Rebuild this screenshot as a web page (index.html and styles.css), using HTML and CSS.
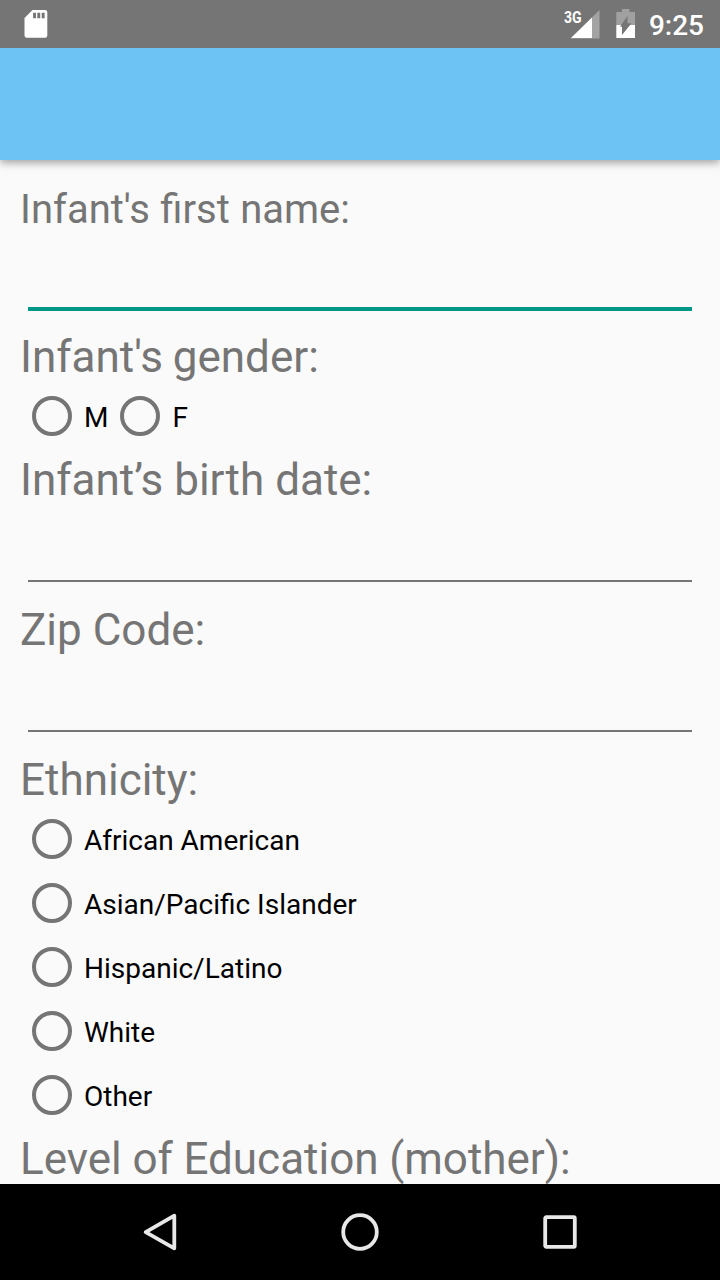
FILE: index.html
```html
<!DOCTYPE html>
<html lang="en">
<head>
<meta charset="utf-8">
<title>Infant details</title>
<link rel="stylesheet" href="styles.css">
</head>
<body>
<div class="screen">
  <div class="status-bar">
    <svg class="sd-card" width="24" height="30" viewBox="0 0 24 30">
      <path fill="#fff" fill-rule="evenodd" d="M8.500 1H21q2.300 0 2.300 2.300V26.500q0 2.300-2.300 2.300H2.800Q.500 28.800.500 26.500V9ZM9.100 3.800v5.500H12V3.800Zm4.200 0v5.500h2.900V3.800Zm4.400 0v5.500h2.900V3.800Z"/>
    </svg>
    <div class="status-right">
      <span class="network">3G</span>
      <svg class="signal" width="30" height="30" viewBox="0 0 30 30">
        <path fill="#a3a3a3" d="M29.500 1v28.500H.5Z"/>
        <path fill="#fff" d="M22 8.400v20.600H1Z"/>
      </svg>
      <svg class="battery" width="20" height="30" viewBox="0 0 20 30">
        <path fill="#a0a0a0" d="M6 0h7.500v3H19v13H.3V3H6Z"/>
        <path fill="#fff" d="M.3 16H19v13H.3Z"/>
        <path fill="#757575" d="M11.500 7v7.200h4L6 26v-8.300H4Z"/>
      </svg>
      <span class="clock">9:25</span>
    </div>
  </div>
  <header class="app-bar"></header>
  <main class="form">
    <label class="title title-small" for="name">Infant's first name:</label>
    <input class="field field-active" id="name" type="text">
    <div class="title title-gender">Infant's gender:</div>
    <div class="radio-row">
      <label class="radio"><span class="ring"></span><span class="radio-text">M</span></label>
      <label class="radio"><span class="ring"></span><span class="radio-text">F</span></label>
    </div>
    <label class="title title-birth" for="birth">Infant’s birth date:</label>
    <input class="field" id="birth" type="text">
    <label class="title title-after-field" for="zip">Zip Code:</label>
    <input class="field" id="zip" type="text">
    <div class="title title-after-field">Ethnicity:</div>
    <div class="radio-list">
      <label class="radio"><span class="ring"></span><span class="radio-text">African American</span></label>
      <label class="radio"><span class="ring"></span><span class="radio-text">Asian/Pacific Islander</span></label>
      <label class="radio"><span class="ring"></span><span class="radio-text">Hispanic/Latino</span></label>
      <label class="radio"><span class="ring"></span><span class="radio-text">White</span></label>
      <label class="radio"><span class="ring"></span><span class="radio-text">Other</span></label>
    </div>
    <div class="title title-education">Level of Education (mother):</div>
  </main>
  <nav class="nav-bar">
    <svg width="48" height="48" viewBox="0 0 48 48"><path d="M38.300 7.700v32.600L9.700 24.200Z"/></svg>
    <svg width="48" height="48" viewBox="0 0 48 48"><circle cx="24" cy="24" r="16.800"/></svg>
    <svg width="48" height="48" viewBox="0 0 48 48"><rect x="9.200" y="9.200" width="29.600" height="29.600" rx="1"/></svg>
  </nav>
</div>
</body>
</html>
```
FILE: styles.css
```css
* {
  box-sizing: border-box;
}

body {
  margin: 0;
  font-family: Roboto, sans-serif;
}

.screen {
  display: flex;
  flex-direction: column;
  width: 720px;
  height: 1280px;
  overflow: hidden;
  background: #fafafa;
}

.status-bar {
  z-index: 2;
  display: flex;
  flex: none;
  justify-content: space-between;
  height: 48px;
  padding: 9px 16px 0 24px;
  background: #757575;
  color: #fff;
}

.status-right {
  display: flex;
}

.network {
  width: 6px;
  font-size: 16px;
  font-weight: 700;
  line-height: 17px;
  white-space: nowrap;
  transform: scaleX(0.88);
  transform-origin: 0 0;
}

.battery {
  margin-left: 16px;
}

.clock {
  margin-left: 13px;
  font-size: 28px;
  font-weight: 500;
  line-height: 33px;
}

.app-bar {
  z-index: 1;
  flex: none;
  height: 112px;
  background: #6ec3f5;
  box-shadow: 0 3px 8px rgba(0, 0, 0, 0.35);
}

.form {
  display: flex;
  flex: 1;
  flex-direction: column;
  min-height: 0;
  padding: 26px 20px 0;
  overflow: hidden;
}

.title {
  flex: none;
  color: #757575;
  font-size: 44px;
  line-height: 52px;
  white-space: nowrap;
}

.title-small {
  font-size: 40px;
  line-height: 48px;
  word-spacing: 0.5px;
}

.title-gender {
  margin-top: 20px;
  word-spacing: -1px;
}

.title-birth {
  margin-top: 6px;
}

.title-after-field {
  margin-top: 22px;
}

.title-education {
  margin-top: 6px;
  word-spacing: -0.3px;
}

.field {
  flex: none;
  height: 76px;
  margin: 0 8px;
  padding: 0;
  border: 0;
  border-bottom: 2px solid #757575;
  outline: 0;
  background: transparent;
  font: 36px Roboto, sans-serif;
}

.field-active {
  height: 77px;
  border-bottom: 4px solid #009688;
}

.radio-row {
  display: flex;
  gap: 12px;
  margin-top: 1px;
  padding-left: 12px;
}

.radio-list {
  display: flex;
  flex-direction: column;
  margin-top: 1px;
  padding-left: 12px;
}

.radio {
  display: flex;
  align-items: center;
  gap: 12px;
  height: 64px;
}

.ring {
  width: 40px;
  height: 40px;
  border: 4px solid #757575;
  border-radius: 50%;
}

.radio-text {
  padding-top: 4px;
  color: #000;
  font-size: 28px;
  line-height: 32px;
}

.nav-bar {
  display: flex;
  flex: none;
  justify-content: center;
  gap: 152px;
  height: 96px;
  padding-top: 24px;
  background: #000;
}

.nav-bar svg {
  fill: none;
  stroke: #e8e8e8;
  stroke-width: 3.800;
  stroke-linejoin: round;
}
```
